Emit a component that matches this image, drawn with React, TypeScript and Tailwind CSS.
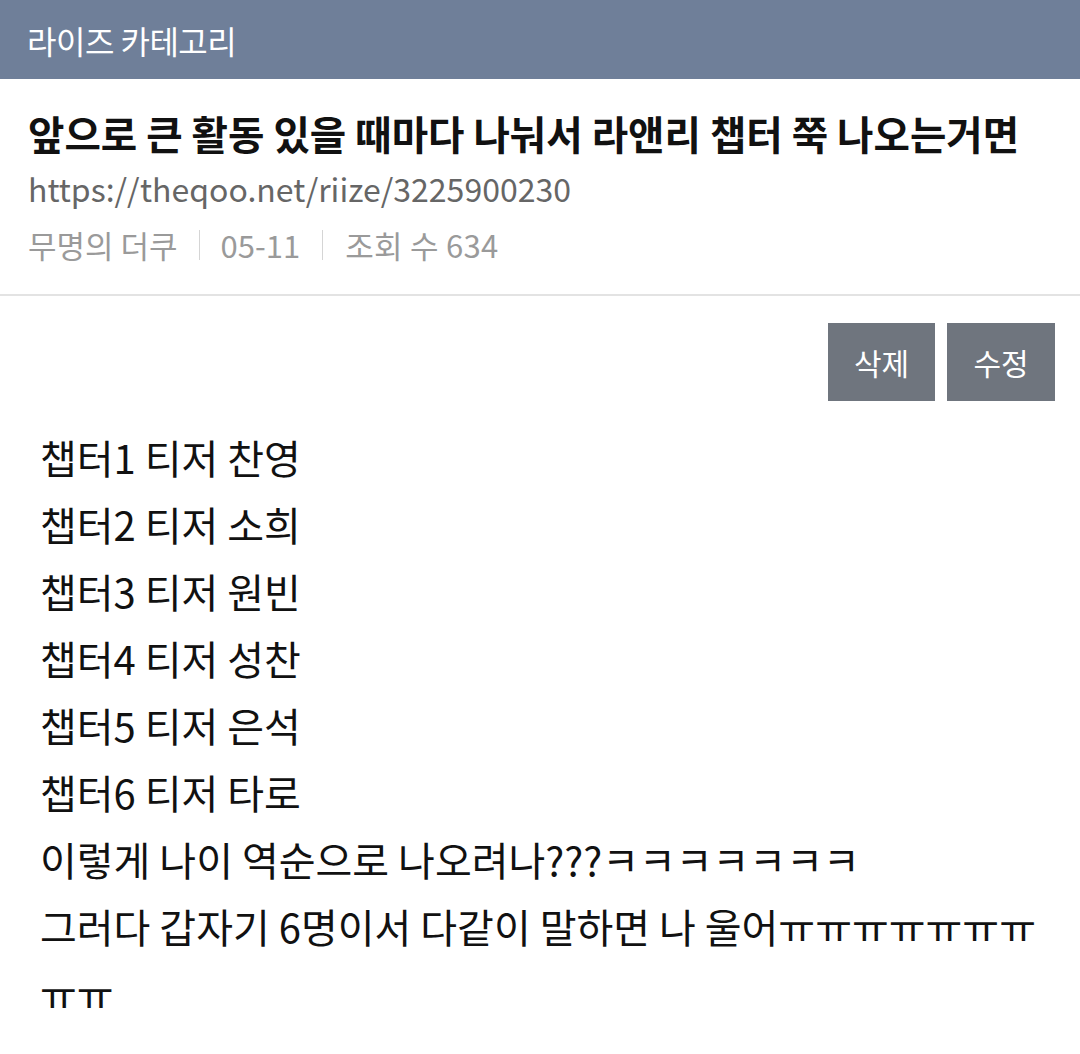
import React from "react";

const font = { fontFamily: '"Noto Sans CJK KR", "Noto Sans", sans-serif' };

export default function App() {
  const lines = [
    "챕터1 티저 찬영",
    "챕터2 티저 소희",
    "챕터3 티저 원빈",
    "챕터4 티저 성찬",
    "챕터5 티저 은석",
    "챕터6 티저 타로",
    "이렇게 나이 역순으로 나오려나???ㅋㅋㅋㅋㅋㅋㅋ",
    "그러다 갑자기 6명이서 다같이 말하면 나 울어ㅠㅠㅠㅠㅠㅠㅠㅠㅠ",
  ];
  return (
    <div className="w-[1080px] h-[1054px] bg-white overflow-hidden" style={font}>
      <div className="h-[79px] bg-[#6f7f99] flex items-center pl-[27px]">
        <span className="text-[32px] text-white tracking-[-0.5px]">라이즈 카테고리</span>
      </div>
      <div className="px-[28px] pt-[28px] pb-[29px] border-b-2 border-[#e3e3e3]">
        <div className="text-[39.6px] font-bold text-[#111] leading-[52px] whitespace-nowrap">
          앞으로 큰 활동 있을 때마다 나눠서 라앤리 챕터 쭉 나오는거면
        </div>
        <div className="text-[32px] text-[#666] leading-[40px] mt-[9px]">
          https://theqoo.net/riize/3225900230
        </div>
        <div className="flex items-center text-[31px] text-[#9a9a9a] leading-[40px] mt-[17px]">
          <span>무명의 더쿠</span>
          <span className="w-[1px] h-[30px] bg-[#d5d5d5] mx-[21px]"></span>
          <span>05-11</span>
          <span className="w-[1px] h-[30px] bg-[#d5d5d5] mx-[22px]"></span>
          <span className="tracking-[0.3px]">조회 수 634</span>
        </div>
      </div>
      <div className="flex justify-end gap-[12px] pr-[25px] pt-[27px]">
        <div className="w-[107px] h-[78px] bg-[#6f757e] text-white text-[30px] flex items-center justify-center">삭제</div>
        <div className="w-[108px] h-[78px] bg-[#6f757e] text-white text-[30px] flex items-center justify-center">수정</div>
      </div>
      <div className="pl-[40px] pr-[40px] pt-[23px] text-[40px] text-[#111] leading-[67px] break-all">
        {lines.map((l, i) => (
          <div key={i}>{l}</div>
        ))}
      </div>
    </div>
  );
}
